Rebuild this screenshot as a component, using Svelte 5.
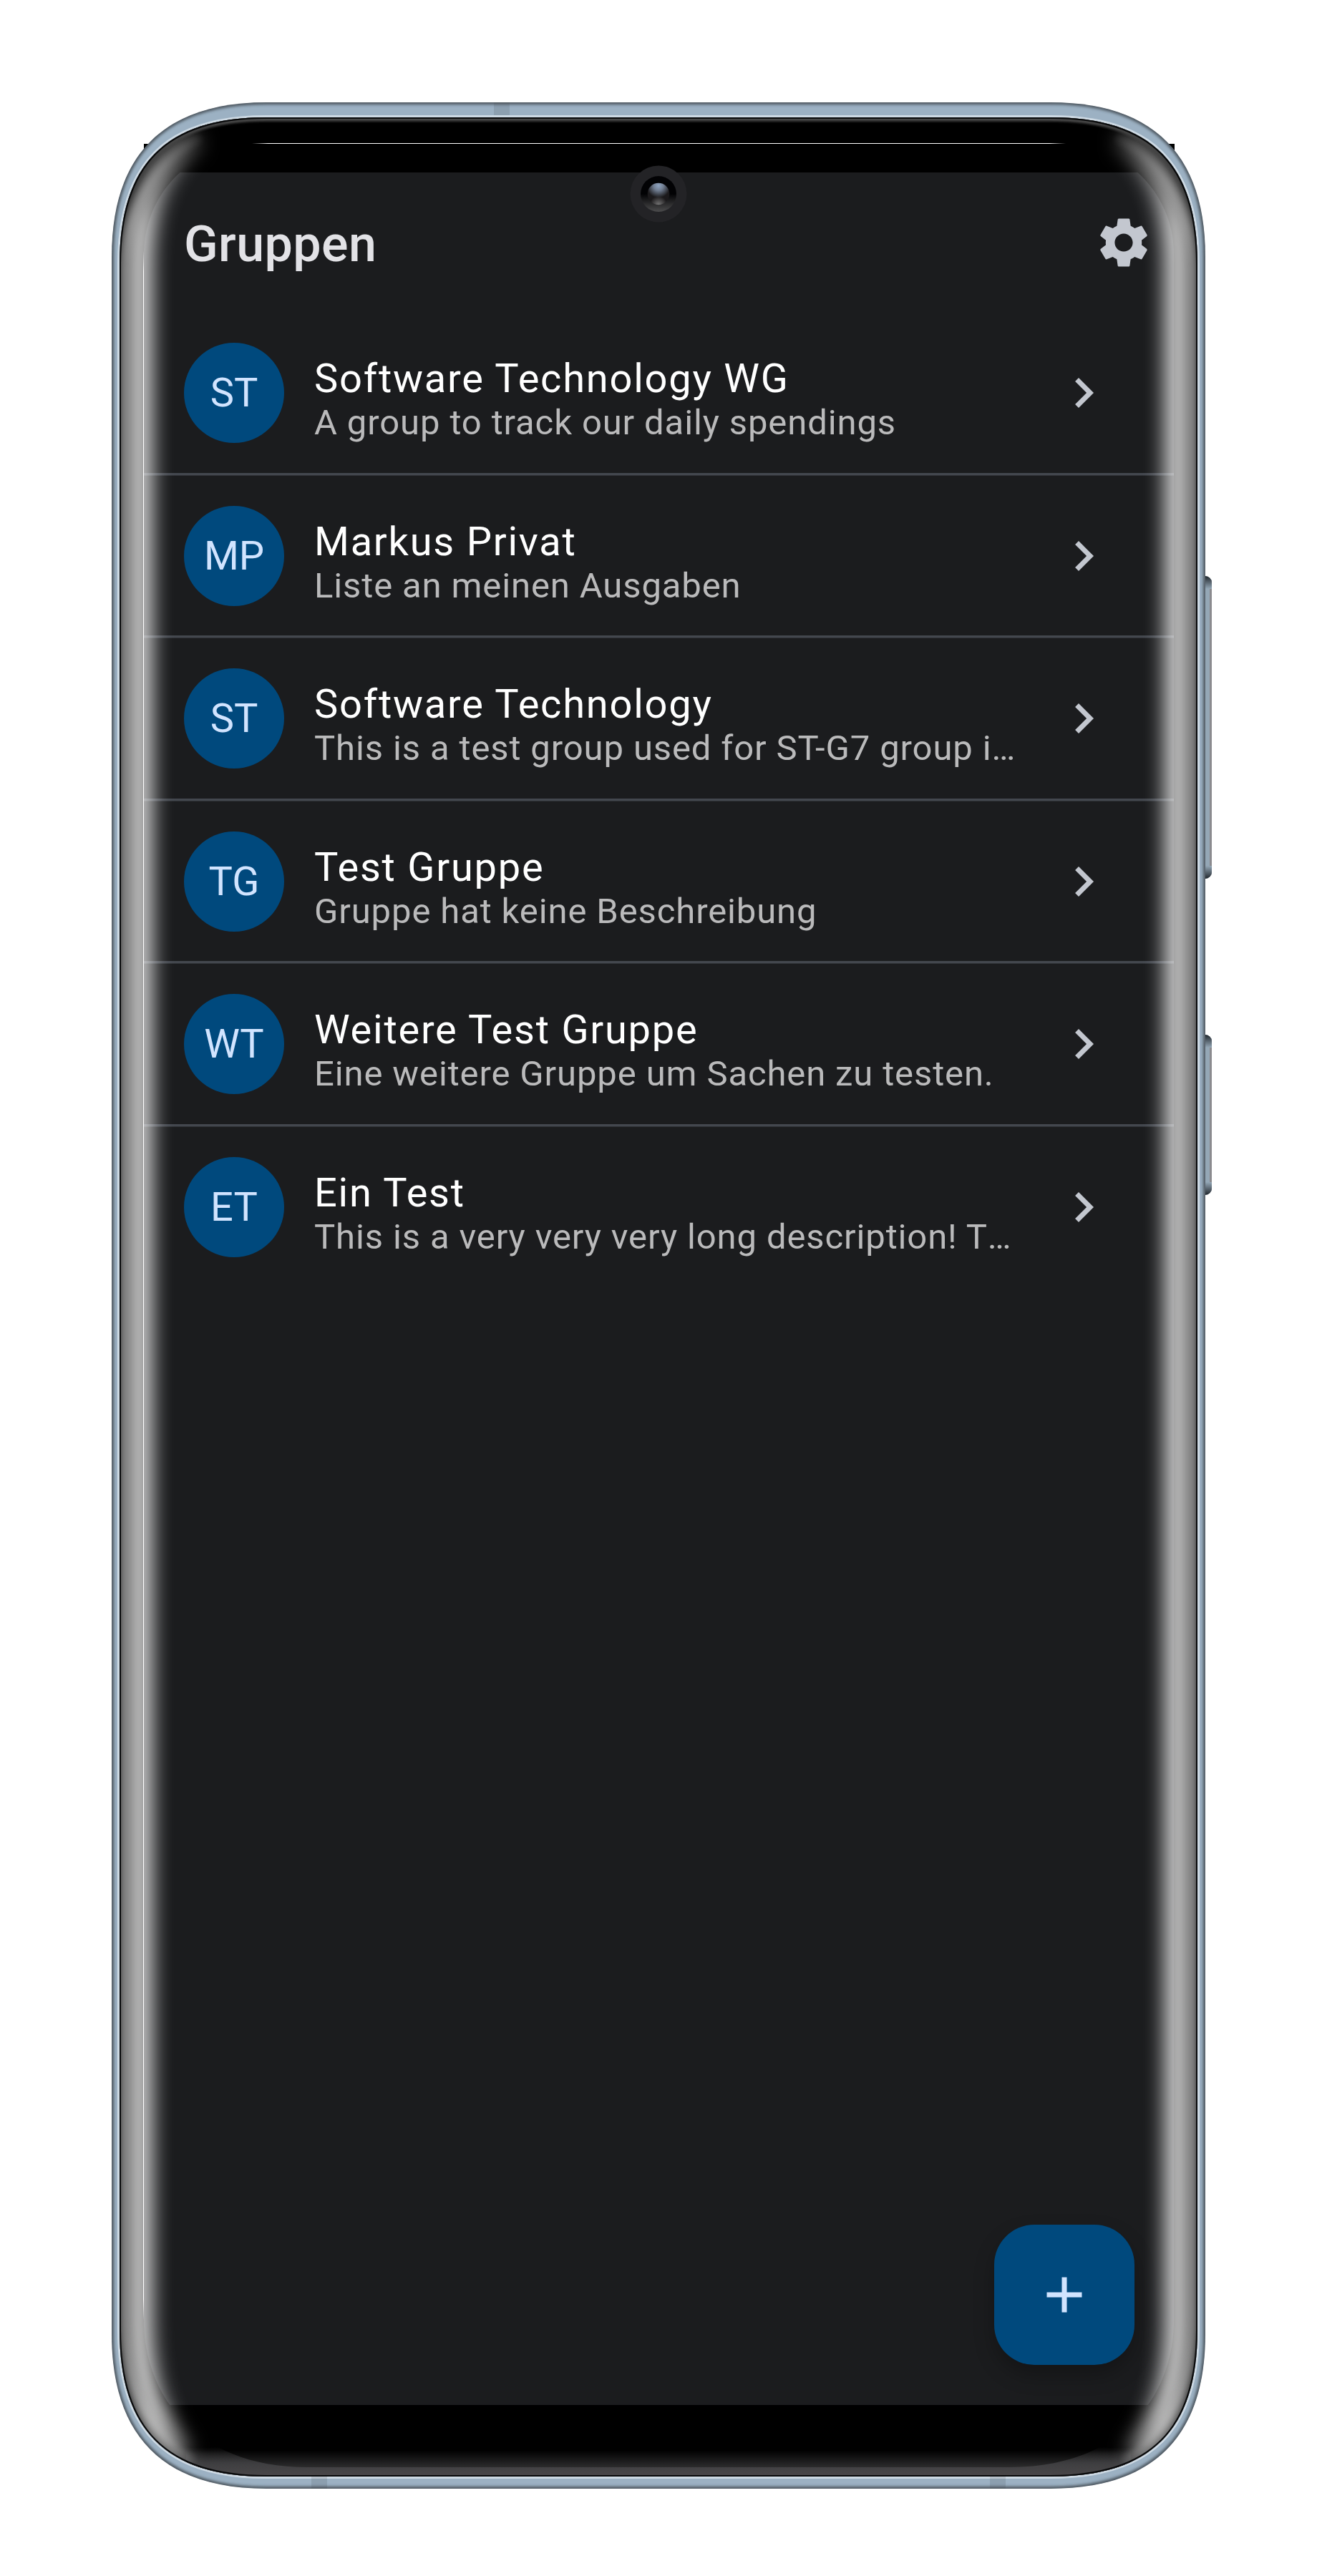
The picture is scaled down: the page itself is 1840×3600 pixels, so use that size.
<script>
  const groups = [
    { initials: 'ST', name: 'Software Technology WG', text: 'A group to track our daily spendings' },
    { initials: 'MP', name: 'Markus Privat', text: 'Liste an meinen Ausgaben' },
    { initials: 'ST', name: 'Software Technology', text: 'This is a test group used for ST-G7 group i', cut: true },
    { initials: 'TG', name: 'Test Gruppe', text: 'Gruppe hat keine Beschreibung' },
    { initials: 'WT', name: 'Weitere Test Gruppe', text: 'Eine weitere Gruppe um Sachen zu testen.' },
    { initials: 'ET', name: 'Ein Test', text: 'This is a very very very long description! T', cut: true }
  ];

  // Rounded body outlines; corners use long cubic curves.
  function outline(x0, y0, x1, y1, len, ctl) {
    return `M${x0} ${y0 + len}C${x0} ${y0 + ctl} ${x0 + ctl} ${y0} ${x0 + len} ${y0}H${x1 - len}` +
      `C${x1 - ctl} ${y0} ${x1} ${y0 + ctl} ${x1} ${y0 + len}V${y1 - len}` +
      `C${x1} ${y1 - ctl} ${x1 - ctl} ${y1} ${x1 - len} ${y1}H${x0 + len}` +
      `C${x0 + ctl} ${y1} ${x0} ${y1 - ctl} ${x0} ${y1 - len}Z`;
  }
  const body = outline(156, 143, 1684, 3478, 216, 73);
  const glass = outline(167, 164, 1673, 3461, 205, 65);
  const display = 'M201 355C201 270 270 201 355 201H1486C1571 201 1640 270 1640 355V3243' +
    'C1640 3343 1572 3448 1410 3448H430C269 3448 201 3343 201 3243Z';
  const shine = 'M272 186C222 226 194 280 194 370V3240C194 3325 210 3385 252 3436';
  const edge = 'M280 192C215 225 173 290 173 380V3240C173 3340 205 3400 270 3440';
</script>

<div class="stage">
  <svg class="art" viewBox="0 0 1840 3600" aria-hidden="true">
    <defs>
      <clipPath id="body-clip"><path d={body} /></clipPath>
      <linearGradient id="key" x1="0" y1="0" x2="0" y2="1">
        <stop offset="0" stop-color="#20262c" /><stop offset="1" stop-color="#94a7b6" />
      </linearGradient>
      <filter id="rim-blur" x="-5%" y="-5%" width="110%" height="110%"><feGaussianBlur stdDeviation="2.2" /></filter>
      <clipPath id="key-clip">
        <rect x="1670" y="805" width="23" height="423" rx="9" />
        <rect x="1670" y="1446" width="23" height="224" rx="9" />
      </clipPath>
    </defs>
    <path d="M201 201H1641V260H201Z" fill="#000" />
    <g clip-path="url(#key-clip)">
      <rect x="1680" y="800" width="14" height="900" fill="#94a7b6" />
      <rect x="1690" y="800" width="4" height="900" fill="#8b8b8f" />
      <rect x="1680" y="805" width="14" height="18" fill="url(#key)" />
      <rect x="1680" y="1446" width="14" height="18" fill="url(#key)" />
      <rect x="1680" y="1210" width="14" height="18" fill="url(#key)" transform="rotate(180 1687 1219)" />
      <rect x="1680" y="1652" width="14" height="18" fill="url(#key)" transform="rotate(180 1687 1661)" />
    </g>
    <g clip-path="url(#body-clip)">
      <path d={body} fill="#9cb1c3" />
      <path d={glass} fill="none" stroke="#cdd9e3" stroke-width="6" />
      <g fill="#000" opacity="0.1">
        <rect x="690" y="143" width="22" height="18" />
        <rect x="435" y="3461" width="22" height="17" />
        <rect x="1383" y="3461" width="22" height="17" />
      </g>
      <path d={body} fill="none" stroke="#3c454c" stroke-width="5" filter="url(#rim-blur)" />
    </g>
    <path d={glass} fill="#000" />
  </svg>

  <main class="screen">
    <header class="bar">
      <h1>Gruppen</h1>
      <svg class="icon" viewBox="0 0 24 24" aria-label="Einstellungen">
        <path d="M19.14 12.94c.04-.3.06-.61.06-.94 0-.32-.02-.64-.07-.94l2.03-1.58c.18-.14.23-.41.12-.61l-1.92-3.32c-.12-.22-.37-.29-.59-.22l-2.39.96c-.5-.38-1.03-.7-1.62-.94l-.36-2.54c-.04-.24-.24-.41-.48-.41h-3.84c-.24 0-.43.17-.47.41l-.36 2.54c-.59.24-1.13.57-1.62.94l-2.39-.96c-.22-.08-.47 0-.59.22L2.74 8.87c-.12.21-.08.47.12.61l2.03 1.58c-.05.3-.09.63-.09.94s.02.64.07.94l-2.03 1.58c-.18.14-.23.41-.12.61l1.92 3.32c.12.22.37.29.59.22l2.39-.96c.5.38 1.03.7 1.62.94l.36 2.54c.05.24.24.41.48.41h3.84c.24 0 .44-.17.47-.41l.36-2.54c.59-.24 1.13-.56 1.62-.94l2.39.96c.22.08.47 0 .59-.22l1.92-3.32c.12-.22.07-.47-.12-.61l-2.01-1.58zM12 15.6c-1.98 0-3.6-1.62-3.6-3.6s1.62-3.6 3.6-3.6 3.6 1.62 3.6 3.6-1.62 3.6-3.6 3.6z" />
      </svg>
    </header>

    <ul>
      {#each groups as group}
        <li>
          <span class="avatar">{group.initials}</span>
          <div class="copy">
            <span class="name">{group.name}</span>
            <span class="text" class:cut={group.cut}>{group.text}</span>
          </div>
          <svg class="icon" viewBox="0 0 24 24" aria-hidden="true">
            <path d="M10 6L8.59 7.41 13.17 12l-4.58 4.59L10 18l6-6z" />
          </svg>
        </li>
      {/each}
    </ul>

    <button class="fab" aria-label="Gruppe hinzufügen">
      <svg class="icon" viewBox="0 0 24 24"><path d="M19 13h-6v6h-2v-6H5v-2h6V5h2v6h6v2z" /></svg>
    </button>
  </main>

  <svg class="art" viewBox="0 0 1840 3600" aria-hidden="true">
    <defs>
      <clipPath id="glass-clip"><path d={glass} /></clipPath>
      <mask id="bezel-mask" maskUnits="userSpaceOnUse" x="0" y="0" width="1840" height="3600">
        <rect width="1840" height="3600" fill="#fff" /><path d={display} fill="#000" />
      </mask>
      <linearGradient id="fade" gradientUnits="userSpaceOnUse" x1="0" y1="160" x2="0" y2="3470">
        <stop offset="0" stop-color="#fff" stop-opacity="0" />
        <stop offset="0.008" stop-color="#fff" stop-opacity="0.22" />
        <stop offset="0.022" stop-color="#fff" stop-opacity="0.5" />
        <stop offset="0.048" stop-color="#fff" stop-opacity="0.8" />
        <stop offset="0.975" stop-color="#fff" stop-opacity="0.8" />
        <stop offset="0.988" stop-color="#fff" stop-opacity="0.5" />
        <stop offset="1" stop-color="#fff" stop-opacity="0" />
      </linearGradient>
      <linearGradient id="base-glow" x1="0" y1="0" x2="0" y2="1">
        <stop offset="0" stop-color="#000" /><stop offset="1" stop-color="#2c2c2d" />
      </linearGradient>
      <linearGradient id="base-rim" x1="0" y1="0" x2="0" y2="1">
        <stop offset="0" stop-color="#404042" stop-opacity="0" />
        <stop offset="0.6" stop-color="#404042" />
        <stop offset="1" stop-color="#4a4749" />
      </linearGradient>
      <linearGradient id="hair-x" x1="0" x2="1" y1="0" y2="0">
        <stop offset="0" stop-color="#fff" stop-opacity="0" /><stop offset="0.02" stop-color="#fff" />
        <stop offset="0.98" stop-color="#fff" /><stop offset="1" stop-color="#fff" stop-opacity="0" />
      </linearGradient>
      <linearGradient id="hair-y" x1="0" x2="0" y1="0" y2="1">
        <stop offset="0" stop-color="#fff" stop-opacity="0" /><stop offset="0.01" stop-color="#fff" />
        <stop offset="0.99" stop-color="#fff" /><stop offset="1" stop-color="#fff" stop-opacity="0" />
      </linearGradient>
      <linearGradient id="top-rim" gradientUnits="userSpaceOnUse" x1="0" y1="164" x2="0" y2="270">
        <stop offset="0" stop-color="#4c4c4c" /><stop offset="1" stop-color="#4c4c4c" stop-opacity="0" />
      </linearGradient>
      <filter id="shine-blur" filterUnits="userSpaceOnUse" x="100" y="100" width="1640" height="3420"><feGaussianBlur stdDeviation="14" /></filter>
      <filter id="edge-blur" filterUnits="userSpaceOnUse" x="100" y="100" width="1640" height="3420"><feGaussianBlur stdDeviation="5" /></filter>
      <filter id="soft" filterUnits="userSpaceOnUse" x="100" y="100" width="1640" height="3420"><feGaussianBlur stdDeviation="1.5" /></filter>
      <linearGradient id="ring" x1="0" y1="0" x2="0" y2="1">
        <stop offset="0.5" stop-color="#020204" /><stop offset="1" stop-color="#4c4c4d" />
      </linearGradient>
      <radialGradient id="lens-top" cx="0.5" cy="0.12" r="0.55">
        <stop offset="0" stop-color="#8fa4c0" /><stop offset="0.4" stop-color="#717e92" /><stop offset="1" stop-color="#1b191b" />
      </radialGradient>
      <radialGradient id="lens-low" cx="0.5" cy="1" r="0.4">
        <stop offset="0" stop-color="#777" /><stop offset="1" stop-color="#777" stop-opacity="0" />
      </radialGradient>
    </defs>
    <g clip-path="url(#glass-clip)">
      <rect x="260" y="3424" width="1320" height="24" fill="url(#base-glow)" />
      <g mask="url(#bezel-mask)"><rect x="160" y="3420" width="1520" height="41" fill="url(#base-rim)" /></g>
      <g fill="none" stroke="url(#fade)" stroke-width="38" filter="url(#shine-blur)">
        <path d={shine} />
        <path d={shine} transform="matrix(-1 0 0 1 1840 0)" />
      </g>
      <g fill="none" stroke="url(#fade)" stroke-width="12" filter="url(#edge-blur)" opacity="0.28">
        <path d={edge} />
        <path d={edge} transform="matrix(-1 0 0 1 1840 0)" />
      </g>
      <path d={glass} fill="none" stroke="url(#top-rim)" stroke-width="11" filter="url(#soft)" />
      <path d={glass} fill="none" stroke="#08090a" stroke-width="4" />
      <rect x="352" y="200" width="1137" height="1" fill="url(#hair-x)" />
      <rect x="200" y="350" width="1" height="2892" fill="url(#hair-y)" />
    </g>
    <circle cx="920" cy="271" r="39.5" fill="#232326" />
    <circle cx="920" cy="271" r="25" fill="url(#ring)" />
    <circle cx="920" cy="271" r="15.3" fill="url(#lens-top)" />
    <circle cx="920" cy="271" r="15.3" fill="url(#lens-low)" />
  </svg>
</div>

<style>
  :global(body) {
    background: #fff;
  }
  .stage {
    position: relative;
    box-sizing: border-box;
    width: 1840px;
    height: 3600px;
    padding: 241px 199px 239px 201px;
    overflow: hidden;
    font-family: Roboto, sans-serif;
  }
  .art {
    position: absolute;
    inset: 0;
    width: 1840px;
    height: 3600px;
    pointer-events: none;
  }
  .screen {
    position: relative;
    display: flex;
    flex-direction: column;
    width: 1439px;
    height: 3120px;
    background: #1b1c1e;
    clip-path: path('M0 114C0 29 69 -40 154 -40H1285C1370 -40 1439 29 1439 114V3002C1439 3102 1371 3207 1209 3207H229C68 3207 0 3102 0 3002Z');
  }
  .bar {
    display: flex;
    align-items: center;
    justify-content: space-between;
    height: 196px;
    padding: 0 28px 0 56px;
  }
  h1 {
    margin: 0;
    padding-top: 3px;
    color: #e2e2e6;
    font-size: 70px;
    font-weight: 500;
    line-height: 82px;
    letter-spacing: 0.4px;
  }
  .icon {
    flex: none;
    width: 84px;
    height: 84px;
    fill: #c3c7cf;
  }
  ul {
    margin: 0;
    padding: 0;
    list-style: none;
  }
  li {
    display: flex;
    align-items: center;
    box-sizing: border-box;
    height: 227.5px;
    padding: 0 84px 3.5px 56px;
    background: linear-gradient(#43474e 75%, #2f3236 75%) bottom / 100% 4px no-repeat;
  }
  li:last-child {
    background: none;
  }
  .avatar {
    display: grid;
    flex: none;
    place-items: center;
    width: 140px;
    height: 140px;
    border-radius: 50%;
    background: #00497d;
    color: #d1e4ff;
    font-size: 56px;
  }
  .copy {
    display: flex;
    flex: 1;
    flex-direction: column;
    min-width: 0;
    padding: 19px 0 0 42px;
    white-space: nowrap;
  }
  .name {
    color: #fff;
    font-size: 56px;
    line-height: 65px;
    letter-spacing: 1.75px;
  }
  .text {
    color: #bababb;
    font-size: 49px;
    line-height: 58px;
    letter-spacing: 0.875px;
  }
  .cut::after {
    content: '…';
    display: inline-block;
  }
  .fab {
    display: grid;
    place-items: center;
    align-self: flex-end;
    width: 196px;
    height: 196px;
    margin: auto 55px 56px 0;
    padding: 0;
    border: 0;
    border-radius: 56px;
    background: #00497d;
    box-shadow: 0 14px 28px rgb(0 0 0 / 0.26);
  }
  .fab .icon {
    fill: #d1e4ff;
  }
</style>
